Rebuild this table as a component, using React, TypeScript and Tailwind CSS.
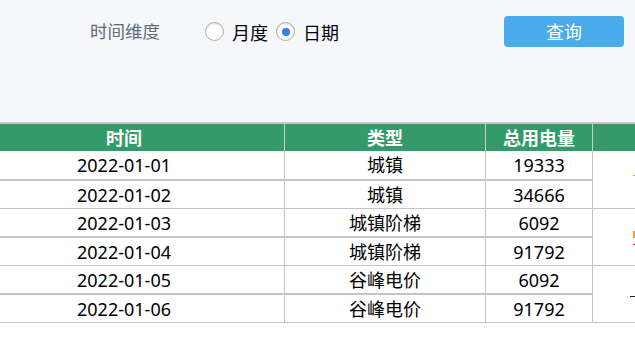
import React, { Fragment } from 'react';

const rows = [
  { date: '2022-01-01', type: '城镇', total: '19333' },
  { date: '2022-01-02', type: '城镇', total: '34666' },
  { date: '2022-01-03', type: '城镇阶梯', total: '6092' },
  { date: '2022-01-04', type: '城镇阶梯', total: '91792' },
  { date: '2022-01-05', type: '谷峰电价', total: '6092' },
  { date: '2022-01-06', type: '谷峰电价', total: '91792' },
];

function Radio({ checked }: { checked?: boolean }) {
  return (
    <span className="flex h-[19px] w-[19px] items-center justify-center rounded-full border border-[#a9adb3] bg-white shadow-[inset_0_1px_2px_rgba(0,0,0,0.15)]">
      {checked && <span className="h-[8px] w-[8px] rounded-full bg-[#2f7fe6]" />}
    </span>
  );
}

// cut-off content of the 4th column, only its left edge shows
function Edge({ i }: { i: number }) {
  if (i === 0)
    return (
      <div className="pl-[40px] pt-[24px]">
        <div className="h-px w-[3px] bg-[#e0a020]" />
      </div>
    );
  if (i === 2)
    return (
      <div className="pl-[40px] pt-[22px]">
        <div className="h-[7px] w-[3px] bg-[#f0a030]" />
        <div className="mt-[6px] h-px w-[3px] bg-[#b0203a]" />
      </div>
    );
  return (
    <div className="pl-[37px] pt-[30px]">
      <div className="h-px w-[6px] bg-[#202040]" />
    </div>
  );
}

export default function App() {
  const heights = ['h-[30px]', 'h-[28px]', 'h-[29px]', 'h-[28px]', 'h-[29px]', 'h-[28px]'];

  return (
    <div className="w-[635px] h-[344px] overflow-hidden bg-white font-['Noto_Sans','Noto_Sans_CJK_SC',sans-serif] text-[18px]">
      <div className="h-[122px] bg-[#f5f7fa] pt-[16px]">
        <div className="flex h-[31px] items-center">
          <span className="ml-[90px] whitespace-nowrap text-[17.5px] text-[#5f6b78] leading-none">时间维度</span>
          <label className="ml-[45px] flex items-center gap-[8px]">
            <Radio />
            <span className="whitespace-nowrap pt-[3px] leading-none text-black">月度</span>
          </label>
          <label className="ml-[8px] flex items-center gap-[8px]">
            <Radio checked />
            <span className="whitespace-nowrap pt-[3px] leading-none text-black">日期</span>
          </label>
          <button className="ml-[165px] h-[31px] w-[120px] rounded-[4px] bg-[#4aaaea] leading-none text-white">
            查询
          </button>
        </div>
      </div>

      <div className="border-t-2 border-[#c8c8c8]">
        <div className="-ml-[36px] grid w-max grid-cols-[321px_201px_107px_200px] grid-rows-[27px_30px_28px_29px_28px_29px_28px] text-center">
          {['时间', '类型', '总用电量', ''].map((h, i) => (
            <div
              key={i}
              className="flex items-center justify-center border-r border-[#c6d0cb] bg-[#349a6a] font-bold leading-none text-white"
            >
              {h}
            </div>
          ))}
          {rows.map((r, i) => {
            const line = i % 2 === 0 ? 'border-b-2' : 'border-b';
            const cell = `flex items-center justify-center border-r border-[#c4c4c4] leading-none text-black ${line} ${heights[i]}`;
            return (
              <Fragment key={r.date}>
                <div className={cell}>{r.date}</div>
                <div className={cell}>{r.type}</div>
                <div className={cell}>{r.total}</div>
                {i % 2 === 0 && (
                  <div className="row-span-2 border-b border-[#c4c4c4]">
                    <Edge i={i} />
                  </div>
                )}
              </Fragment>
            );
          })}
        </div>
      </div>
    </div>
  );
}
